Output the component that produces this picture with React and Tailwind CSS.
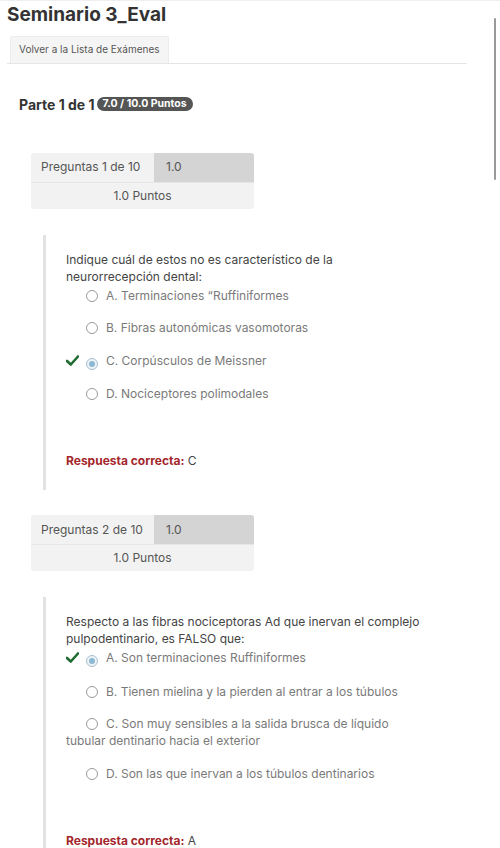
import React from "react";

const questions = [
  {
    n: 1,
    text: ["Indique cuál de estos no es característico de la", "neurorrecepción dental:"],
    options: [
      "A. Terminaciones “Ruffiniformes",
      "B. Fibras autonómicas vasomotoras",
      "C. Corpúsculos de Meissner",
      "D. Nociceptores polimodales",
    ],
    selected: 2,
    answer: "C",
  },
  {
    n: 2,
    text: ["Respecto a las fibras nociceptoras Ad que inervan el complejo", "pulpodentinario, es FALSO que:"],
    options: [
      "A. Son terminaciones Ruffiniformes",
      "B. Tienen mielina y la pierden al entrar a los túbulos",
      "C. Son muy sensibles a la salida brusca de líquido tubular dentinario hacia el exterior",
      "D. Son las que inervan a los túbulos dentinarios",
    ],
    selected: 0,
    answer: "A",
  },
];

function Check() {
  return (
    <svg width="13" height="11" viewBox="0 0 13 11" className="inline-block align-[-1px]">
      <path d="M1 6 L4.8 9.5 L12 1.5" fill="none" stroke="#1f6b32" strokeWidth="2.6" strokeLinecap="round" strokeLinejoin="round" />
    </svg>
  );
}

function Radio({ on }) {
  return (
    <span
      className={
        "inline-flex items-center justify-center w-[12px] h-[12px] rounded-full border align-[-2px] " +
        (on ? "border-[#a9c0cf] bg-[#eef3f6]" : "border-[#9a9a9a] bg-white")
      }
    >
      {on && <span className="w-[6px] h-[6px] rounded-full bg-[#8db8d3]" />}
    </span>
  );
}

function Question({ q }) {
  return (
    <div>
      <div className="ml-[24px] w-[223px] rounded-[3px] overflow-hidden text-[12px] text-[#555]">
        <div className="flex h-[29px]">
          <div className="w-[123px] bg-[#f2f2f2] flex items-center pl-[10px]">Preguntas {q.n} de 10</div>
          <div className="flex-1 bg-[#d4d4d4] flex items-center pl-[12px]">1.0</div>
        </div>
        <div className="h-[27px] bg-[#f2f2f2] border-t border-[#e6e6e6] flex items-center justify-center">1.0 Puntos</div>
      </div>
      <div className="ml-[36px] mt-[26px] border-l-[3px] border-[#e2e2e2] pl-[20px] pt-[16px] pb-[21px] text-[12px] leading-[17px]">
        <div className="w-[340px]">
          <p className="text-[#444] whitespace-nowrap">
            {q.text[0]}
            <br />
            {q.text[1]}
          </p>
          <div className="mt-[2px] flex flex-col gap-[15.5px] text-[#7a7a7a]">
            {q.options.map((o, i) => (
              <div key={i}>
                <span className="inline-block w-[20px]">{i === q.selected && <Check />}</span>
                <Radio on={i === q.selected} />
                <span className="ml-[8px]">{o}</span>
              </div>
            ))}
          </div>
          <p className="mt-[50px]">
            <span className="font-bold text-[#a3262b]">Respuesta correcta:</span>{" "}
            <span className="text-[#444]">{q.answer}</span>
          </p>
        </div>
      </div>
    </div>
  );
}

export default function App() {
  return (
    <div className="relative w-[500px] h-[848px] overflow-hidden bg-white font-['Inter','Liberation_Sans',Arial,sans-serif]">
      <div className="border-t border-[#efefef]" />
      <div className="absolute right-[4px] top-[18px] w-[2px] h-[162px] rounded-full bg-[#9a9a9a]" />
      <div className="px-[7px] w-[474px]">
        <h1 className="text-[19px] font-bold text-[#333] leading-[24px] pt-[2px]">Seminario 3_Eval</h1>
        <div className="mt-[8px] border-b border-[#e5e5e5] pl-[3px]">
          <div className="inline-flex items-center h-[27px] px-[8px] bg-[#f5f5f5] border border-b-0 border-[#ececec] rounded-t-[2px] text-[10px] text-[#555]">
            Volver a la Lista de Exámenes
          </div>
        </div>
        <div className="mt-[30px] ml-[12px] flex items-center gap-[2px]">
          <span className="text-[14px] font-bold text-[#333]">Parte 1 de 1</span>
          <span className="h-[14px] px-[6px] rounded-full bg-[#555] text-white text-[10.5px] font-bold leading-[14px]">
            7.0 / 10.0 Puntos
          </span>
        </div>
        <div className="mt-[38px] flex flex-col gap-[25px]">
          {questions.map((q) => (
            <Question key={q.n} q={q} />
          ))}
        </div>
      </div>
    </div>
  );
}
